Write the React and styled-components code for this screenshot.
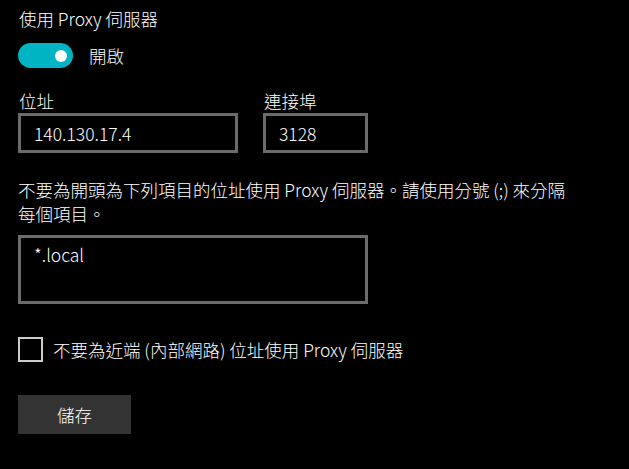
import { useState } from "react";
import styled, { createGlobalStyle } from "styled-components";

const GlobalStyle = createGlobalStyle`
  html, body {
    margin: 0;
    padding: 0;
    background: #000000;
  }
  body {
    font-family: "Noto Sans CJK TC", "Noto Sans", sans-serif;
    font-weight: 300;
    color: #ffffff;
  }
`;

const Page = styled.div`
  display: flex;
  flex-direction: column;
  align-items: flex-start;
  padding: 6px 18px 0 18px;
  width: 629px;
  height: 469px;
  box-sizing: border-box;
  background: #000000;
`;

const Title = styled.div`
  font-size: 17.5px;
  line-height: 25px;
  padding-left: 1px;
`;

const ToggleRow = styled.div`
  display: flex;
  align-items: center;
  gap: 16px;
  margin-top: 12px;
  cursor: pointer;
`;

const Toggle = styled.div`
  display: flex;
  align-items: center;
  justify-content: ${(p) => (p.$on ? "flex-end" : "flex-start")};
  width: 55px;
  height: 25px;
  box-sizing: border-box;
  padding: 0 6px;
  border-radius: 13px;
  background: ${(p) => (p.$on ? "#00b4c3" : "transparent")};
  border: ${(p) => (p.$on ? "none" : "2px solid #ffffff")};
`;

const Knob = styled.span`
  width: 12px;
  height: 12px;
  border-radius: 50%;
  background: #ffffff;
`;

const ToggleLabel = styled.span`
  font-size: 17.5px;
  line-height: 25px;
`;

const FieldRow = styled.div`
  display: flex;
  gap: 25px;
  margin-top: 21px;
`;

const Field = styled.div`
  display: flex;
  flex-direction: column;
`;

const Label = styled.label`
  font-size: 17.5px;
  line-height: 24px;
  padding-left: 1px;
`;

const TextBox = styled.input`
  width: ${(p) => p.$w}px;
  height: 40px;
  box-sizing: border-box;
  border: 3px solid #6b6b6b;
  background: #000000;
  color: #ffffff;
  font-family: "Noto Sans CJK TC", "Noto Sans", sans-serif;
  font-weight: 300;
  font-size: 17.5px;
  padding: 0 13px;
  margin: 0;
  outline: none;
`;

const Description = styled.p`
  margin: 25px 0 0 0;
  font-size: 17.5px;
  line-height: 24px;
  white-space: nowrap;
`;

const TextArea = styled.textarea`
  margin-top: 9px;
  width: 350px;
  height: 69px;
  box-sizing: border-box;
  border: 3px solid #6b6b6b;
  background: #000000;
  color: #ffffff;
  font-family: "Noto Sans CJK TC", "Noto Sans", sans-serif;
  font-weight: 300;
  font-size: 17.5px;
  line-height: 25px;
  padding: 4px 13px;
  resize: none;
  outline: none;
`;

const CheckRow = styled.label`
  display: flex;
  align-items: center;
  gap: 10px;
  margin-top: 33px;
  cursor: pointer;
`;

const CheckBox = styled.span`
  width: 25px;
  height: 25px;
  box-sizing: border-box;
  border: 2px solid #cccccc;
  background: ${(p) => (p.$checked ? "#00b4c3" : "transparent")};
`;

const CheckText = styled.span`
  font-size: 17.5px;
  line-height: 25px;
`;

const Button = styled.button`
  margin-top: 33px;
  width: 113px;
  height: 39px;
  border: none;
  background: #333333;
  color: #ffffff;
  font-family: "Noto Sans CJK TC", "Noto Sans", sans-serif;
  font-weight: 300;
  font-size: 17.5px;
  cursor: pointer;
`;

export default function App() {
  const [on, setOn] = useState(true);
  const [local, setLocal] = useState(false);

  return (
    <>
      <GlobalStyle />
      <Page>
        <Title>使用 Proxy 伺服器</Title>
        <ToggleRow onClick={() => setOn(!on)}>
          <Toggle $on={on}>
            <Knob />
          </Toggle>
          <ToggleLabel>{on ? "開啟" : "關閉"}</ToggleLabel>
        </ToggleRow>
        <FieldRow>
          <Field>
            <Label>位址</Label>
            <TextBox $w={220} defaultValue="140.130.17.4" />
          </Field>
          <Field>
            <Label>連接埠</Label>
            <TextBox $w={105} defaultValue="3128" />
          </Field>
        </FieldRow>
        <Description>
          不要為開頭為下列項目的位址使用 Proxy 伺服器。請使用分號 (;) 來分隔
          <br />
          每個項目。
        </Description>
        <TextArea defaultValue="*.local" />
        <CheckRow onClick={() => setLocal(!local)}>
          <CheckBox $checked={local} />
          <CheckText>不要為近端 (內部網路) 位址使用 Proxy 伺服器</CheckText>
        </CheckRow>
        <Button>儲存</Button>
      </Page>
    </>
  );
}
